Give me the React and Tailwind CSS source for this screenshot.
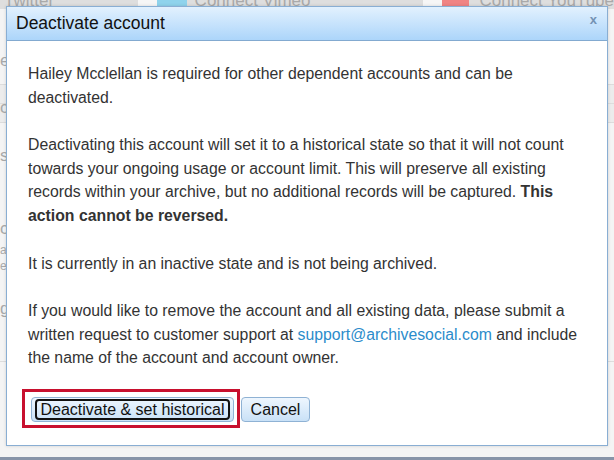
// Deactivate account confirmation dialog over a dimmed settings page.

const font = { fontFamily: '"Liberation Sans", Arial, sans-serif' };

function BackgroundPage() {
  return (
    <div className="relative h-[460px] w-[614px] overflow-hidden bg-[#f4f4f4] text-[#a9a9a9]">
      <div className="flex h-[9px] items-end overflow-hidden bg-[#dedede] text-[17px] leading-none">
        <span className="ml-[4px] w-[144px]">Twitter</span>
        <span className="h-[9px] w-[20px] bg-[#f6f6f6]" />
        <span className="h-[9px] w-[32px] bg-[#8fd3ec]" />
        <span className="ml-[8px] w-[245px] whitespace-nowrap">Connect Vimeo</span>
        <span className="h-[9px] w-[20px] bg-[#f6f6f6]" />
        <span className="h-[9px] w-[30px] bg-[#f08484]" />
        <span className="ml-[10px] whitespace-nowrap">Connect YouTube</span>
      </div>
      <div className="mt-[39px] flex flex-col text-[17px]">
        <span>e</span>
        <div className="mt-[10px] h-[39px] border-y border-[#dcdcdc] bg-[#ececec] pt-[14px] leading-none">c</div>
        <span className="mt-[20px]">s</span>
        <span className="mt-[48px]">c</span>
        <span className="text-[12px] leading-[16px]">ac</span>
        <span className="text-[12px] leading-[16px]">er</span>
        <span className="mt-[22px]">g</span>
      </div>
      <div className="absolute left-0 right-0 top-[103px] h-px bg-[#dddddd]" />
      <div className="absolute left-0 right-0 top-[361px] h-px bg-[#dddddd]" />
      <div className="absolute bottom-0 left-0 right-0 h-[3px] bg-[#8794a8]" />
    </div>
  );
}

function DeactivateDialog() {
  return (
    <div
      role="dialog"
      aria-label="Deactivate account"
      className="absolute left-[6px] top-[6px] flex h-[440px] w-[602px] flex-col border border-[#89aed3] bg-white shadow-[0_0_3px_rgba(0,0,0,0.15)]"
    >
      <div className="relative flex h-[34px] shrink-0 items-center border-b border-[#83aad0] bg-gradient-to-b from-[#e2f1fe] to-[#acd5fa] pl-[9px]">
        <h1 className="text-[17.5px] text-[#111111]">Deactivate account</h1>
        <span className="absolute right-[10px] top-[3px] text-[13px] font-bold text-[#7492b3]">x</span>
      </div>

      <div className="px-[21px] pt-[21px] text-[15.8px] leading-[23.6px] text-[#333333]">
        <p>Hailey Mcclellan is required for other dependent accounts and can be deactivated.</p>
        <p className="mt-[24px]">
          Deactivating this account will set it to a historical state so that it will not count towards
          your ongoing usage or account limit. This will preserve all existing records within your
          archive, but no additional records will be captured. <b>This action cannot be reversed.</b>
        </p>
        <p className="mt-[24px]">It is currently in an inactive state and is not being archived.</p>
        <p className="mt-[24px]">
          If you would like to remove the account and all existing data, please submit a written request
          to customer support at{' '}
          <a className="text-[#2b8ccb]" href="#support">
            support@archivesocial.com
          </a>{' '}
          and include the name of the account and account owner.
        </p>
      </div>

      <div className="mt-auto mb-[23px] flex gap-[7px] pl-[24px]">
        <button className="relative flex h-[25px] w-[203px] items-center justify-center rounded-[4px] border border-[#8fb2d4] bg-gradient-to-b from-[#eef6fe] to-[#c9e1f7] text-[16px] text-[#111111]">
          <span className="absolute inset-x-[3px] inset-y-[1px] rounded-[4px] border-2 border-[#111111]" />
          Deactivate &amp; set historical
        </button>
        <button className="flex h-[25px] w-[69px] items-center justify-center rounded-[4px] border border-[#8fb2d4] bg-gradient-to-b from-[#eef6fe] to-[#c9e1f7] text-[16px] text-[#111111]">
          Cancel
        </button>
      </div>

      <div className="pointer-events-none absolute left-[15px] top-[382px] h-[39px] w-[218px] border-[3px] border-[#c8102e]" />
    </div>
  );
}

export default function App() {
  return (
    <div className="relative h-[460px] w-[614px] overflow-hidden" style={font}>
      <BackgroundPage />
      <DeactivateDialog />
    </div>
  );
}
